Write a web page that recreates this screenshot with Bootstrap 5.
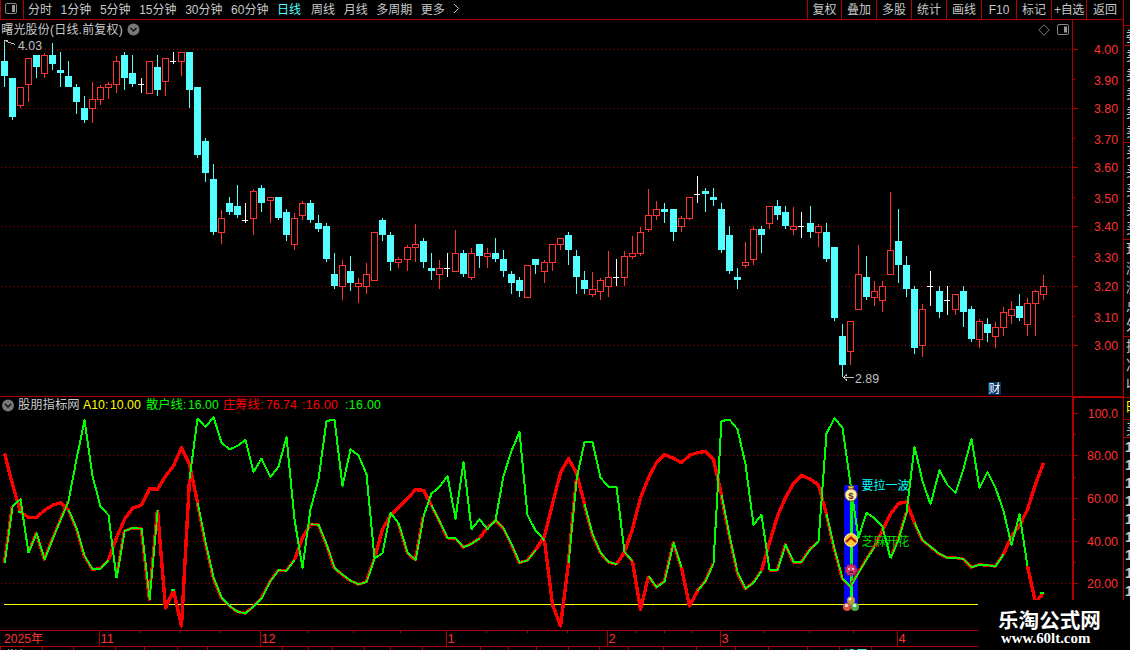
<!DOCTYPE html>
<html lang="zh-CN">
<head>
<meta charset="utf-8">
<title>曙光股份 日线</title>
<link href="https://cdn.jsdelivr.net/npm/bootstrap@5.3.0/dist/css/bootstrap.min.css" rel="stylesheet">
<style>
:root{--line:#b00000;--up:#ff3232;--down:#54ffff;--txt:#c8c8c8}
body{width:1130px;height:650px;overflow:hidden;background:#000;color:var(--txt);font:12px/19px "Liberation Sans","Noto Sans CJK SC",sans-serif}
.main-col{width:1124px;border-right:1px solid var(--line)}
.topbar{height:20px;border-bottom:1px solid var(--line);white-space:nowrap}
.icon-cell{width:24px;border-left:1px solid var(--line);border-right:1px solid var(--line)}
.periods{gap:8.6px;margin-left:4px;padding-top:1px}
.tool{width:35px;border-left:1px solid var(--line);text-align:center;padding-top:1px}
.tool.first{width:34px}
.tool.last{width:37px}
.tool.tight{letter-spacing:-.3px}
.cyan{color:var(--down);margin-right:1.4px}
.price-title{height:20px;margin-bottom:-2px}
.price-title .label{letter-spacing:.2px}
.price-panel{height:376px}
.ind-panel{height:234px;border-top:1px solid var(--line)}
.ind-title{height:16px;line-height:17px;font-size:12.3px;white-space:nowrap}
.ind-title span{display:block}
.t-name{width:65px}.t-a{width:27px}.t-av{width:36px}.t-s{width:42px}.t-sv{width:35px}.t-z{width:43px}.t-zv{width:36px}.t-r{width:43px}
.wide{letter-spacing:.35px}
.yellow{color:#ff0}.green{color:#0f0}.red{color:#f00}
.months{height:17px;border-top:1px solid var(--line);border-bottom:1px solid var(--line)}
svg{display:block;overflow:visible}
svg text{font-family:"Liberation Sans","Noto Sans CJK SC",sans-serif}
.side{width:6px;overflow:hidden}
.side section{border-top:1px solid var(--line);overflow:hidden;width:20px;padding-left:2px;font-size:14px}
.s0{height:25px}.s1{height:20px;line-height:20px}.s2{height:97px;line-height:19px}.s5{height:61px;line-height:19px}
.s6{height:22px;color:#ff0}.s7{height:18px}
.side .s8{height:163px;line-height:18px;font-weight:bold;padding-left:1px}
.brand{left:978px;top:600px;width:152px;height:50px;color:#fff}
.brand-cn{font:bold 20.6px/22px "Noto Sans CJK SC",sans-serif;padding:8px 0 0 20px;height:31px}
.brand-url{font:bold 14.900px/15px "Liberation Serif",serif;padding-left:23px}
</style>
</head>
<body class="d-flex position-relative">
<div class="main-col d-flex flex-column flex-shrink-0">
  <header class="topbar d-flex">
    <div class="icon-cell"><svg width="22" height="19" viewBox="1 0 22 19"><rect x="5.5" y="3.5" width="11" height="10" rx="1.5" fill="none" stroke="#888"/><path d="M12 5h3v7h-3z" fill="#999"/></svg></div>
    <nav class="periods d-flex">
      <span>分时</span><span>1分钟</span><span>5分钟</span><span>15分钟</span><span>30分钟</span><span>60分钟</span><span class="cyan">日线</span><span>周线</span><span>月线</span><span>多周期</span><span>更多</span>
      <svg class="ms-n1" width="8" height="18"><path d="M1 3l4.500 4.500-4.500 4.500" fill="none" stroke="#c0c0c0"/></svg>
    </nav>
    <div class="d-flex ms-auto">
      <div class="tool first">复权</div><div class="tool">叠加</div><div class="tool">多股</div><div class="tool">统计</div><div class="tool">画线</div><div class="tool">F10</div><div class="tool">标记</div><div class="tool tight">+自选</div><div class="tool last">返回</div>
    </div>
  </header>

  <section class="price-panel">
    <div class="price-title d-flex align-items-center">
      <span class="label">&#8202;曙光股份(日线.前复权)</span>
      <svg class="ms-1" width="14" height="14"><circle cx="6.500" cy="6.500" r="6" fill="#777"/><path d="M3.500 5l3 3 3-3" stroke="#111" stroke-width="1.500" fill="none"/></svg>
      <svg class="ms-auto me-2" width="10" height="12"><path d="M6 .8L11.200 6 6 11.200.8 6z" fill="none" stroke="#777"/></svg>
      <svg width="67" height="14"><rect x="1.500" y="1.500" width="11" height="10" rx="1.500" fill="none" stroke="#888"/><path d="M8 3.500h3v6H8z" fill="#999"/></svg>
    </div>
    <svg id="price" width="1123" height="358" viewBox="0 38 1123 358" shape-rendering="crispEdges"></svg>
  </section>

  <section class="ind-panel">
    <div class="ind-title d-flex">
      <svg width="18" height="16"><circle cx="8" cy="8.500" r="6" fill="#777"/><path d="M5 7l3 3 3-3" stroke="#111" stroke-width="1.500" fill="none"/></svg>
      <span class="t-name">股朋指标网</span><span class="yellow t-a">A10:</span><span class="yellow t-av">10.00</span><span class="green t-s">散户线:</span><span class="green t-sv">16.00</span><span class="red t-z">庄筹线:</span><span class="red t-zv">76.74</span><span class="red t-r wide">:16.00</span><span class="green wide">:16.00</span>
    </div>
    <svg id="indicator" width="1123" height="217" viewBox="0 413 1123 217" shape-rendering="crispEdges"></svg>
  </section>
  <footer class="months"><svg id="months" width="1123" height="19" viewBox="0 631 1123 19" shape-rendering="crispEdges"></svg></footer>
</div>

<aside class="side">
  <section class="s0 border-top-0"></section><section class="s1">委</section>
  <section class="s2">卖<br>卖<br>卖<br>卖<br>卖</section><section class="s2">买<br>买<br>买<br>买<br>买</section>
  <section class="s2">现<br>涨<br>涨<br>总<br>外</section><section class="s5">换<br>净<br>收</section>
  <section class="s6">时</section><section class="s7">买</section>
  <section class="s8">1<br>1<br>1<br>1<br>1<br>1<br>1<br>1<br>1</section>
</aside>

<div class="brand position-absolute bg-black"><div class="brand-cn">乐淘公式网</div><div class="brand-url">www.60lt.com</div></div>

<script>
// centre of each trading day's column
const days=[4,12,20,28,36,44,52,60,68,76,84,92,100,108,116,124,132,141,149,157,165,173,181,189,197,205,213,221,229,237,245,253,261,270,278,286,294,302,310,318,326,334,342,350,358,366,374,382,390,398,407,415,423,431,439,447,455,463,471,479,487,495,503,511,519,527,535,544,552,560,568,576,584,592,600,608,616,624,632,640,648,656,664,673,681,689,697,705,713,721,729,737,745,753,761,769,777,785,793,801,810,818,826,834,842,850,858,866,874,882,890,898,906,914,922,930,939,947,955,963,971,979,987,995,1003,1011,1019,1027,1035,1043];
// kind (c falling, r rising, w unchanged), high, body top, body bottom, low
const candles=`c40,61,76,87 c78,78,117,120 r87,87,106,108 r58,58,85,102 c55,55,67,78 r53,55,74,78 c43,55,64,70 c52,70,73,87 c61,76,87,87 c84,87,102,114 c96,108,120,123 r82,99,109,123 r85,87,100,105 r82,84,88,99 r56,61,85,93 c52,55,78,90 c55,73,84,87 w78,84,85,93 r61,61,94,94 c55,67,90,96 r58,58,82,96 w52,61,62,64 r52,52,62,76 c52,52,90,108 c87,87,155,158 c138,141,173,182 c164,179,232,235 r210,218,233,244 c197,203,212,215 c185,206,215,218 w203,220,221,223 r189,191,219,235 c185,188,203,212 r197,197,201,223 c197,197,218,220 c209,212,235,241 r213,218,245,250 r201,203,216,220 c200,203,220,223 c215,223,229,232 c223,226,259,262 c253,274,286,289 r260,265,287,300 c256,271,283,291 r278,283,287,303 r263,274,287,294 r232,232,281,281 c218,220,235,241 c232,235,262,271 r257,259,263,268 r245,247,260,271 r224,244,248,262 c238,241,262,268 c253,268,271,280 r260,268,275,289 w253,268,269,277 r230,253,272,272 c250,253,274,277 r248,253,278,280 c244,244,256,268 r248,253,257,268 c238,253,259,262 c250,259,271,277 c271,274,283,294 c277,280,291,297 r265,265,298,298 c259,259,265,274 r260,262,272,283 r244,244,263,271 r238,238,245,250 c232,235,250,265 c250,256,277,294 c271,280,289,294 r272,289,295,297 r278,280,292,300 r251,277,287,297 w259,277,278,286 r251,256,278,286 r236,253,257,259 r227,232,254,256 r189,215,230,232 r201,209,216,220 c203,209,212,223 c209,209,232,241 r216,218,227,232 r197,197,219,220 w176,194,195,203 c188,191,194,212 c188,197,200,206 c203,209,250,253 c226,235,271,274 c268,277,280,289 r242,262,266,268 r227,229,260,265 c226,229,235,253 r206,206,224,229 c200,206,215,220 c206,212,226,229 r207,226,230,235 w212,226,227,238 c206,223,232,238 r224,226,233,247 c223,232,259,262 c247,247,318,321 c324,336,365,377 r321,321,352,365 r245,274,310,310 c256,277,297,300 r281,291,298,306 r281,286,301,312 r192,250,275,275 c209,241,265,283 c256,265,289,297 c286,289,348,354 r304,309,346,357 w271,286,287,306 c286,291,312,318 w286,300,301,315 r294,294,310,315 c286,291,312,327 c306,309,339,342 r319,321,340,348 c318,324,333,342 r322,327,337,348 r307,312,328,336 r301,309,316,324 c294,306,318,321 r298,303,325,336 r290,291,304,336 r275,286,295,300`.split(' ');
const rect=(x,y,w,h,f)=>`<rect x="${x}" y="${y}" width="${w}" height="${h}" fill="${f}"/>`;
const text=(x,y,s,f,size,len)=>`<text x="${x}" y="${y}" fill="${f}" font-size="${size}"${len?` textLength="${len}" lengthAdjust="spacingAndGlyphs"`:''}>${s}</text>`;
const dots=y=>`<path d="M1 ${y+.5}H1072" stroke="#a50000" stroke-dasharray="1 3"/>`;
const RED='#b00000',UP='#ff3232',DOWN='#54ffff';

let p='';
[49,108,167,226,286,345].forEach(y=>p+=dots(y)+rect(1073,y,5,1,RED));
[79,138,197,256,316].forEach(y=>p+=rect(1073,y,2,1,RED));
p+=rect(1072,20,1,376,RED);
[49,80,108,139,167,198,226,257,286,317,345].forEach((y,i)=>p+=text(1094,y+5,(4-i/10).toFixed(2),UP,12.8,24));
candles.forEach((c,i)=>{
  const x=days[i],[h,t,b,l]=c.slice(1).split(',').map(Number);
  if(c[0]==='w')p+=rect(x,h,1,l-h,'#fff')+rect(x-3,t,6,1,'#fff');
  else if(c[0]==='c')p+=rect(x,h,1,l-h,DOWN)+rect(x-3,t,7,b-t,DOWN);
  else p+=rect(x,h,1,t-h,UP)+rect(x,b,1,l-b,UP)+`<rect x="${x-2.5}" y="${t+.5}" width="6" height="${b-t-1}" fill="#000" stroke="${UP}"/>`;
});
p+=`<path d="M4.500 44.500V40.500H8M6 41.500L15.500 44.500M843 377.500H854M847 374.500L843.500 377.500L847 380.500" fill="none" stroke="#c0c0c0"/>`;
p+=text(18,50,'4.03','#c0c0c0',12.8,24)+text(855,383,'2.89','#c0c0c0',12.8,24);
p+=rect(988,382,13,13,'#003366')+text(988.500,393,'财','#fff',12);
document.getElementById('price').innerHTML=p;

// both indicator series, in thirds of a pixel below the panel's top edge
const retail=[502,330,310,470,412,490,430,372,315,190,73,240,332,357,547,405,396,398,610,343,636,583,690,250,68,93,63,140,160,150,132,228,188,243,212,123,370,515,340,250,75,71,270,160,178,235,487,472,350,382,470,492,360,293,272,240,368,197,400,370,400,372,240,165,107,358,403,433,625,690,500,250,138,138,245,272,272,468,496,640,540,574,556,440,515,630,585,555,502,75,71,100,205,386,356,522,522,446,498,498,458,437,112,67,95,265,425,350,367,392,487,430,350,152,255,325,223,267,291,218,128,276,228,275,345,447,355,510,620,590];
const banker=[172,265,348,364,364,343,328,320,342,397,480,520,518,492,425,370,337,327,278,280,240,210,155,205,320,440,545,605,630,647,652,631,607,555,523,524,492,425,385,386,445,516,536,554,565,558,487,400,358,335,308,281,283,328,375,426,427,454,443,427,395,373,397,445,500,493,463,420,325,230,188,230,325,415,470,498,505,468,400,305,245,200,176,187,200,178,170,166,190,298,420,530,578,560,524,440,360,305,262,238,250,267,355,460,548,572,530,490,453,403,355,322,318,380,433,452,474,486,485,489,514,506,508,511,475,420,390,340,265,200];
// runs of [first segment, last segment, style]: g green, d green edged with red, r red
const retailRuns=[[0,0,'d'],[1,2,'g'],[3,7,'d'],[8,13,'g'],[14,18,'d'],[19,22,'r'],[23,48,'g'],[49,51,'d'],[52,66,'g'],[67,69,'r'],[70,70,'d'],[71,76,'g'],[77,77,'d'],[78,79,'r'],[80,83,'d'],[84,85,'r'],[86,87,'d'],[88,94,'g'],[95,100,'d'],[101,109,'g'],[110,111,'d'],[112,126,'g'],[127,128,'r']];
const bankerRuns=[[0,7,'r'],[8,12,'d'],[13,23,'r'],[24,35,'d'],[36,37,'r'],[38,45,'d'],[46,52,'r'],[53,58,'d'],[59,60,'r'],[61,65,'d'],[66,71,'r'],[72,75,'d'],[76,88,'r'],[89,93,'d'],[94,101,'r'],[102,107,'d'],[108,112,'r'],[113,123,'d'],[124,128,'r']];
const line=(data,a,b,color,w,dx=0)=>{
  let pts='';
  for(let i=a;i<=b+1;i++)pts+=`${days[i]+.5+dx},${(396+data[i]/3).toFixed(1)} `;
  return `<polyline points="${pts}" fill="none" stroke="${color}" stroke-width="${w}" stroke-linejoin="round"/>`;
};
let q='';
[455,498,541,583].forEach(y=>q+=dots(y));
[413,455,498,541,583].forEach((y,i)=>q+=rect(1074,y,4,1,RED)+text(i?1087:1088,y+5,i?(100-i*20).toFixed(2):'100.0',UP,12.8,i?31:30));
[434,477,519,562].forEach(y=>q+=rect(1074,y,2,1,RED));
q+=rect(1072,397,2,204,RED)+rect(1072,396,51,2,RED)+rect(4,604,974,1,'#ff0');
q+=rect(844,485,14,122,'#00f')+rect(850,488,3,117,'#0f0');
[[retail,retailRuns],[banker,bankerRuns]].forEach(([d,runs])=>runs.forEach(([a,b,k])=>{
  if(k==='r')q+=line(d,a,b,'#f00',3.4);
  if(k==='d')q+=line(d,a,b,'#f00',3,-.3);
}));
[[retail,retailRuns],[banker,bankerRuns]].forEach(([d,runs])=>runs.forEach(([a,b,k])=>{
  if(k!=='r')q+=line(d,a,b,'#0f0',k==='g'?2:1.8,k==='g'?0:.2);
}));
q+=rect(171,589,4,2,'#0f0')+rect(1040,592,4,2,'#0f0')+rect(18,511,4,2,'#0f0');
q+=text(861.500,490,'要拉一波','#0ff',12.2,48)+text(861.500,546,'芝麻开花','#0d0',12.2,48);
q+=`<g shape-rendering="auto">
<path d="M847.500 486h7l-2 4h-3z" fill="#eec34a" stroke="#4a2a10" stroke-width=".7"/><circle cx="851" cy="495" r="6.200" fill="#fff0a0" stroke="#693d19"/><text x="851" y="498.600" text-anchor="middle" font-size="9.500" font-weight="bold" fill="#5c2525">$</text>
<circle cx="851" cy="540" r="6.500" fill="#ffc52e" stroke="#ffef82"/><path d="M846 542l5-4.500 5 4.500" fill="none" stroke="#a51616" stroke-width="2.300"/>
<circle cx="851" cy="570" r="5.300" fill="#d63b70" stroke="#a82353" stroke-width="2.300" stroke-dasharray="2 1.400"/><circle cx="849" cy="569" r="1" fill="#ffdbe7"/><circle cx="853" cy="569" r="1" fill="#ffdbe7"/><path d="M849 573v-1.500h4v1.500z" fill="#571233"/>
<circle cx="851" cy="600.500" r="4" fill="#bd9b35"/><circle cx="850" cy="599" r="1.500" fill="#fff0b1"/><circle cx="847" cy="607" r="4" fill="#de5148"/><circle cx="846.500" cy="605.500" r="1.800" fill="#ffd2c8"/><circle cx="855" cy="607" r="4" fill="#52ad48"/><circle cx="854.500" cy="605.500" r="1.800" fill="#d5ffcb"/></g>`;
document.getElementById('indicator').innerHTML=q;

let m=text(4,643,'2025年',UP,12.3,39);
[[99,'11'],[260,'12'],[446,'1'],[607,'2'],[720,'3'],[897,'4']].forEach(([x,s])=>m+=rect(x,631,1,15,RED)+text(x+1.500,643,s,UP,12.8));
[139,180,220,307,353,400,486,527,567,635,664,692,764,809,853].forEach(x=>m+=rect(x,631,1,2,RED));
[0,42,73,115,144,177,207,282,308,332,364,390,422,480,508,536,568,599,628,663,696,735,768,807,839,871].forEach(x=>m+=rect(x,647,1,3,RED));
m+=text(6,659.500,'指标','#c0c0c0',12)+text(844,659.500,'设置',DOWN,12);
document.getElementById('months').innerHTML=m;
</script>
<script src="https://cdn.jsdelivr.net/npm/bootstrap@5.3.0/dist/js/bootstrap.bundle.min.js"></script>
</body>
</html>
